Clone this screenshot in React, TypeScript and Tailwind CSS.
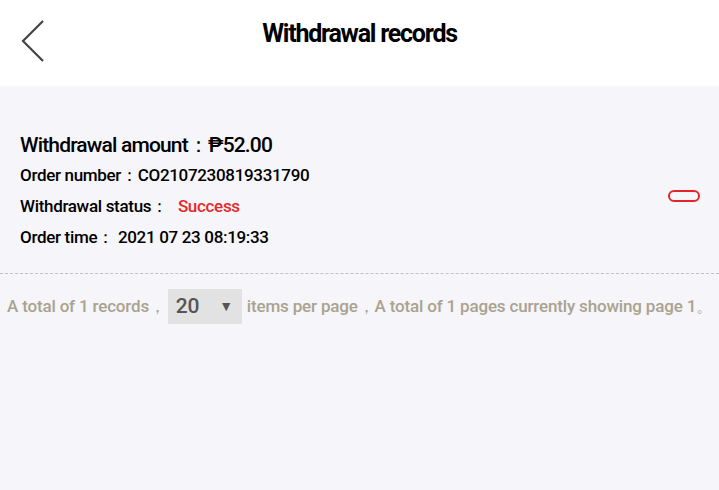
import React from "react";

const font = {
  fontFamily: 'Roboto, "Liberation Sans", sans-serif',
};

export default function App() {
  return (
    <div className="w-[719px] h-[490px] bg-[#f6f5fa] text-black overflow-hidden" style={font}>
      <div className="relative h-[86px] bg-white flex items-center justify-center">
        <button className="absolute left-[20px] top-[20px] w-[26px] h-[42px]">
          <svg viewBox="0 0 26 42" className="w-[26px] h-[42px]" fill="none" stroke="#444" strokeWidth="2.2">
            <path d="M23 1 L3 21 L23 41" />
          </svg>
        </button>
        <h1 className="text-[25px] font-bold tracking-[-0.05em] -mt-[18px]">Withdrawal records</h1>
      </div>

      <div className="flex items-center justify-between pl-[20px] pr-[19px] pt-[44px] pb-[20px] border-b border-dashed border-[#c4c1bb] tracking-[-0.02em]">
        <div className="flex flex-col">
          <div className="text-[21px] font-medium leading-[30px] tracking-[-0.04em]">
            Withdrawal amount：<span>₱52.00</span>
          </div>
          <div className="text-[17px] font-medium leading-[31px]">
            Order number：<span>CO2107230819331790</span>
          </div>
          <div className="text-[17px] font-medium leading-[31px]">
            Withdrawal status：<span className="ml-[10px] text-[#e8262b]">Success</span>
          </div>
          <div className="text-[17px] font-medium leading-[31px]">
            Order time：<span className="ml-[4px]">2021 07 23 08:19:33</span>
          </div>
        </div>
        <div className="w-[32px] h-[12px] rounded-full border-2 border-[#e0262b] mt-[9px]" />
      </div>

      <div className="flex items-center pl-[7px] pt-[15px] text-[17px] font-medium tracking-[-0.01em] text-[#a9a38e] whitespace-nowrap">
        <span>A total of 1 records，</span>
        <div className="ml-[2px] w-[74px] h-[35px] bg-[#e2e2e2] flex items-center justify-between pl-[8px] pr-[9px] text-[#555] text-[21px]">
          <span>20</span>
          <span className="text-[14px]">▼</span>
        </div>
        <span className="ml-[5px]">items per page，A total of 1 pages currently showing page 1。</span>
      </div>
    </div>
  );
}
